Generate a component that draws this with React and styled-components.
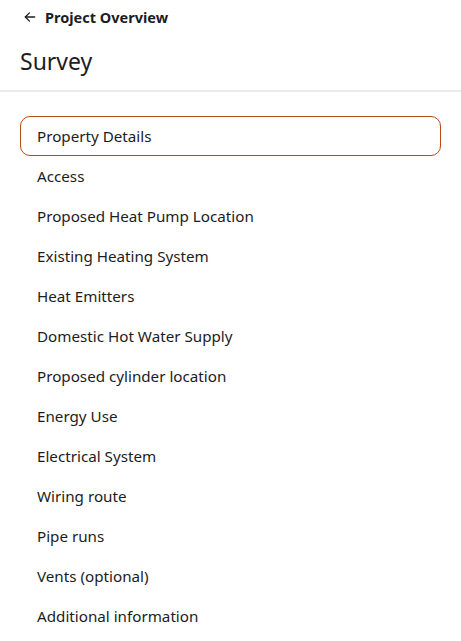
import React from 'react';
import styled, { createGlobalStyle } from 'styled-components';

const GlobalStyle = createGlobalStyle`
  body {
    margin: 0;
    background: #ffffff;
    font-family: "Noto Sans", "Open Sans", sans-serif;
    color: #1c1c24;
  }
`;

const Page = styled.div`
  width: 461px;
  min-height: 641px;
  background: #fff;
`;

const Header = styled.header`
  padding: 7px 20px 0;
  border-bottom: 2px solid #ebebeb;
`;

const BackLink = styled.a`
  display: flex;
  align-items: center;
  gap: 8px;
  height: 20px;
  padding-left: 3px;
  font-size: 14.5px;
  font-weight: 700;
  color: #1c1c24;
  text-decoration: none;
  cursor: pointer;
`;

const Title = styled.h1`
  margin: 0;
  padding: 19px 0 14px;
  font-size: 23px;
  font-weight: 400;
  line-height: 30px;
`;

const Nav = styled.nav`
  display: flex;
  flex-direction: column;
  padding: 24px 20px 0;
`;

const Item = styled.div`
  height: 40px;
  display: flex;
  align-items: center;
  box-sizing: border-box;
  padding: 0 0 1px 16px;
  font-size: 15.2px;
  border: 1px solid ${(p) => (p.$active ? '#b94a10' : 'transparent')};
  border-radius: 10px;
  cursor: pointer;
`;

const sections = [
  'Property Details',
  'Access',
  'Proposed Heat Pump Location',
  'Existing Heating System',
  'Heat Emitters',
  'Domestic Hot Water Supply',
  'Proposed cylinder location',
  'Energy Use',
  'Electrical System',
  'Wiring route',
  'Pipe runs',
  'Vents (optional)',
  'Additional information',
];

const ArrowLeft = () => (
  <svg width="14" height="14" viewBox="0 0 24 24" fill="none" stroke="currentColor" strokeWidth="2.2" strokeLinecap="round" strokeLinejoin="round">
    <path d="M20 12H4" />
    <path d="M11 5l-7 7 7 7" />
  </svg>
);

export default function App() {
  return (
    <Page>
      <GlobalStyle />
      <Header>
        <BackLink>
          <ArrowLeft />
          Project Overview
        </BackLink>
        <Title>Survey</Title>
      </Header>
      <Nav>
        {sections.map((s, i) => (
          <Item key={s} $active={i === 0}>{s}</Item>
        ))}
      </Nav>
    </Page>
  );
}
